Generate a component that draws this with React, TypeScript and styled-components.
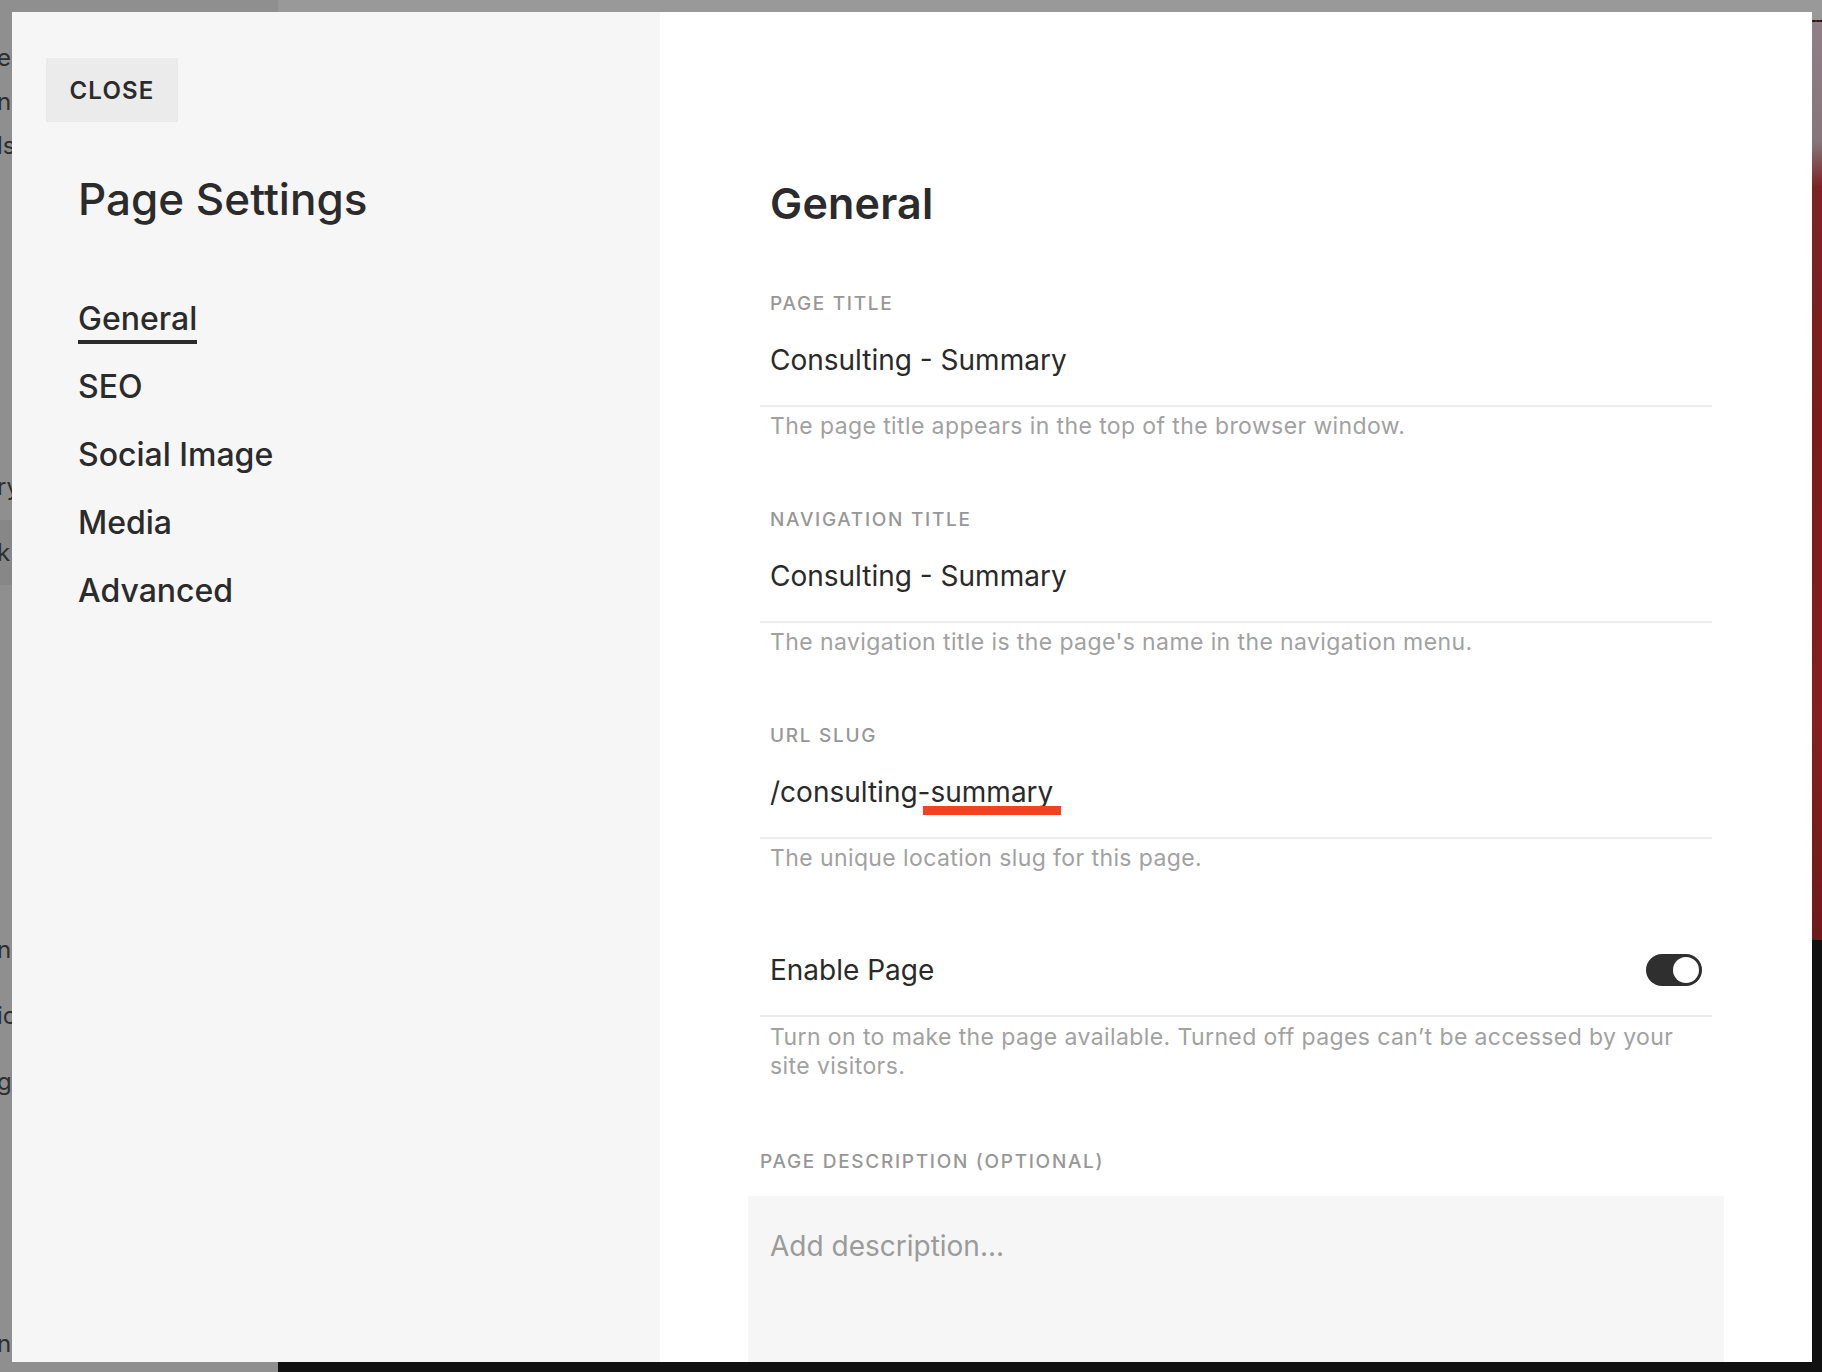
import React from "react";
import styled, { createGlobalStyle } from "styled-components";

const GlobalStyle = createGlobalStyle`
  html, body {
    margin: 0;
    padding: 0;
  }
  body {
    background: #939393;
    font-family: Inter, "Liberation Sans", Arial, sans-serif;
    color: #2b2b2b;
    overflow: hidden;
  }
  * {
    box-sizing: border-box;
  }
`;

const navItems = ["General", "SEO", "Social Image", "Media", "Advanced"];

const App = () => {
  return (
    <>
      <GlobalStyle />
      <Backdrop>
        <Rail>
          <RailGroup $top={43} $gap={14}>
            <RailItem>e</RailItem>
            <RailItem>n</RailItem>
            <RailItem>ls</RailItem>
          </RailGroup>
          <RailGroup $top={311} $gap={0}>
            <RailItem>ry</RailItem>
          </RailGroup>
          <RailBand>
            <RailItem>k</RailItem>
          </RailBand>
          <RailGroup $top={350} $gap={36}>
            <RailItem>n</RailItem>
            <RailItem>ic</RailItem>
            <RailItem>g</RailItem>
          </RailGroup>
          <RailGroup $top={232} $gap={0}>
            <RailItem>na</RailItem>
          </RailGroup>
        </Rail>
        <Stage>
          <StageTop>
            <HeroStrip />
          </StageTop>
          <StageBottom />
        </Stage>
      </Backdrop>

      <Modal>
        <SidePanel>
          <CloseButton>CLOSE</CloseButton>
          <PanelTitle>Page Settings</PanelTitle>
          <Nav>
            {navItems.map((item, i) => (
              <NavItem key={item} $active={i === 0}>
                {item}
              </NavItem>
            ))}
          </Nav>
        </SidePanel>

        <Content>
          <Heading>General</Heading>
          <Form>
            <Field>
              <FieldLabel>PAGE TITLE</FieldLabel>
              <ValueRow>
                <ValueText>Consulting - Summary</ValueText>
              </ValueRow>
              <Helper>The page title appears in the top of the browser window.</Helper>
            </Field>

            <Field>
              <FieldLabel>NAVIGATION TITLE</FieldLabel>
              <ValueRow>
                <ValueText>Consulting - Summary</ValueText>
              </ValueRow>
              <Helper>The navigation title is the page's name in the navigation menu.</Helper>
            </Field>

            <Field>
              <FieldLabel>URL SLUG</FieldLabel>
              <ValueRow>
                <ValueText>
                  /consulting-<Marked>summary</Marked>
                </ValueText>
              </ValueRow>
              <Helper>The unique location slug for this page.</Helper>
            </Field>

            <Field $extra={12}>
              <ValueRow $toggle>
                <ValueText>Enable Page</ValueText>
                <Toggle aria-label="Enable Page">
                  <Knob />
                </Toggle>
              </ValueRow>
              <Helper $wide>
                Turn on to make the page available. Turned off pages can’t be accessed by your site visitors.
              </Helper>
            </Field>

            <Field $extra={2}>
              <FieldLabel $flush>PAGE DESCRIPTION (OPTIONAL)</FieldLabel>
              <DescriptionBox placeholder="Add description..." />
            </Field>
          </Form>
        </Content>
      </Modal>
    </>
  );
};

export default App;

const Backdrop = styled.div`
  display: grid;
  grid-template-columns: 278px 1fr;
  width: 1822px;
  height: 1372px;
`;

const Rail = styled.aside`
  display: flex;
  flex-direction: column;
  background: #8f8f8f;
  overflow: hidden;
`;

const RailGroup = styled.div<{ $top: number; $gap: number }>`
  display: flex;
  flex-direction: column;
  gap: ${(p) => p.$gap}px;
  margin-top: ${(p) => p.$top}px;
`;

const RailBand = styled.div`
  display: flex;
  align-items: center;
  height: 65px;
  margin-top: 18px;
  background: #878787;
`;

const RailItem = styled.span`
  margin-left: -3px;
  font-size: 24px;
  line-height: 30px;
  color: #2e2e2e;
  white-space: nowrap;
`;

const Stage = styled.div`
  display: grid;
  grid-template-rows: 940px 1fr;
`;

const StageTop = styled.div`
  display: flex;
  justify-content: flex-end;
  background: #999999;
`;

const HeroStrip = styled.div`
  width: 40px;
  margin-top: 20px;
  border-top: 2px dotted #1c1c1c;
  background: linear-gradient(
    to bottom,
    #8d8086 0,
    #86767c 120px,
    #7c2424 165px,
    #7a1c1c 400px,
    #84201f 700px,
    #6e1a1a 100%
  );
`;

const StageBottom = styled.div`
  background: #111111;
`;

const Modal = styled.div`
  position: fixed;
  top: 12px;
  left: 12px;
  display: grid;
  grid-template-columns: 648px 1fr;
  width: 1800px;
  height: 1350px;
  overflow: hidden;
`;

const SidePanel = styled.nav`
  display: flex;
  flex-direction: column;
  padding: 46px 34px;
  background: #f6f6f6;
`;

const CloseButton = styled.button`
  align-self: flex-start;
  width: 132px;
  height: 64px;
  padding: 0;
  border: none;
  background: #ebebeb;
  font-family: inherit;
  font-size: 24px;
  font-weight: 600;
  letter-spacing: 1.2px;
  color: #2b2b2b;
`;

const PanelTitle = styled.h1`
  margin: 51px 0 0;
  padding-left: 32px;
  font-size: 44px;
  line-height: 52px;
  font-weight: 500;
  color: #2b2b2b;
`;

const Nav = styled.div`
  display: flex;
  flex-direction: column;
  gap: 23px;
  margin-top: 74px;
  padding-left: 32px;
`;

const NavItem = styled.a<{ $active?: boolean }>`
  align-self: flex-start;
  padding-bottom: 1px;
  border-bottom: 4px solid ${(p) => (p.$active ? "#2b2b2b" : "transparent")};
  font-size: 32px;
  line-height: 40px;
  font-weight: 500;
  color: #2b2b2b;
  cursor: pointer;
`;

const Content = styled.main`
  display: flex;
  flex-direction: column;
  padding: 166px 100px 0;
  background: #ffffff;
  overflow: hidden;
`;

const Heading = styled.h2`
  margin: 0;
  padding-left: 10px;
  font-size: 43px;
  line-height: 50px;
  font-weight: 600;
  letter-spacing: 0.2px;
  color: #2b2b2b;
`;

const Form = styled.div`
  display: flex;
  flex-direction: column;
  gap: 67px;
  margin-top: 64px;
`;

const Field = styled.section<{ $extra?: number }>`
  display: flex;
  flex-direction: column;
  margin-top: ${(p) => p.$extra || 0}px;
`;

const FieldLabel = styled.div<{ $flush?: boolean }>`
  padding-left: ${(p) => (p.$flush ? 0 : 10)}px;
  font-size: 19px;
  line-height: 24px;
  font-weight: 500;
  letter-spacing: 1.7px;
  color: #979797;
`;

const ValueRow = styled.div<{ $toggle?: boolean }>`
  display: flex;
  align-items: center;
  justify-content: space-between;
  padding: ${(p) => (p.$toggle ? "0 10px 27px 10px" : "26px 10px 27px")};
  border-bottom: 2px solid #ececec;
`;

const ValueText = styled.div`
  font-size: 28px;
  line-height: 36px;
  font-weight: 400;
  color: #2a2a2a;
`;

const Marked = styled.span`
  position: relative;

  &::after {
    content: "";
    position: absolute;
    left: -7px;
    right: -8px;
    top: 31px;
    height: 9px;
    background: #f2431f;
  }
`;

const Helper = styled.p<{ $wide?: boolean }>`
  margin: ${(p) => (p.$wide ? "6px" : "4px")} 0 0;
  padding: 0 ${(p) => (p.$wide ? 30 : 10)}px 0 10px;
  font-size: 23px;
  line-height: ${(p) => (p.$wide ? 29 : 30)}px;
  letter-spacing: 0.4px;
  color: #a1a1a1;
`;

const Toggle = styled.button`
  display: flex;
  align-items: center;
  justify-content: flex-end;
  width: 56px;
  height: 32px;
  padding: 0 3px;
  border: none;
  border-radius: 16px;
  background: #2f2f2f;
`;

const Knob = styled.span`
  width: 26px;
  height: 26px;
  border-radius: 50%;
  background: #ffffff;
`;

const DescriptionBox = styled.textarea`
  height: 260px;
  margin: 22px -12px 0;
  padding: 32px 22px;
  border: none;
  outline: none;
  resize: none;
  background: #f6f6f6;
  font-family: inherit;
  font-size: 28px;
  line-height: 36px;
  color: #2a2a2a;

  &::placeholder {
    color: #9b9b9b;
  }
`;
